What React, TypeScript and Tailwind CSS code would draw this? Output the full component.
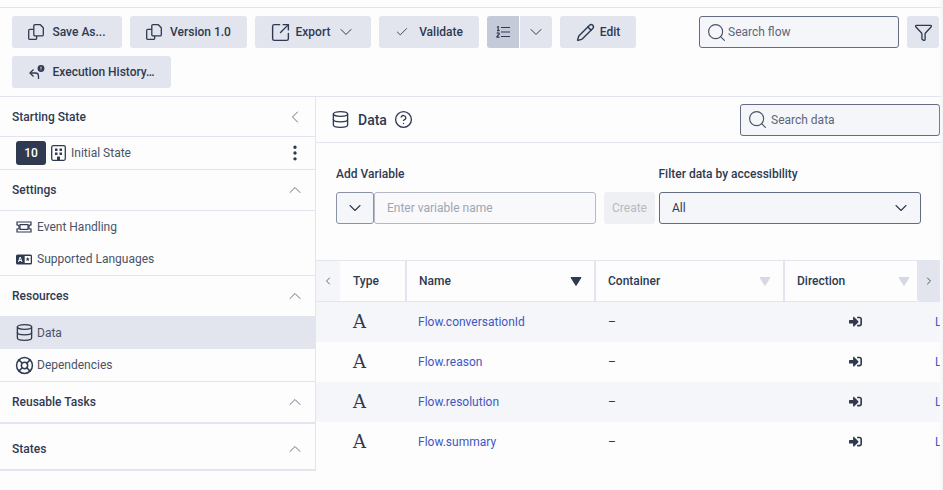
import React from "react";
import { Check, ChevronDown, ChevronLeft, ChevronRight, ChevronUp, Database, EllipsisVertical, Funnel, LifeBuoy, Pencil, Search, SquareArrowOutUpRight, CircleHelp } from "lucide-react";
import { FaSignInAlt } from "react-icons/fa";

const ink = "text-[#2f3a50]";

function CopyIcon() {
  return (
    <svg width="16" height="16" viewBox="0 0 16 16" fill="none" stroke="#2f3a50" strokeWidth="1.3" strokeLinejoin="round" className="shrink-0">
      <path d="M7 .7h5.300l3 3v7a1.200 1.200 0 0 1-1.200 1.200H7a1.200 1.200 0 0 1-1.200-1.200V1.900A1.200 1.200 0 0 1 7 .7z" />
      <path d="M5.800 5.300H1.900A1.200 1.200 0 0 0 .7 6.500v8a.8.800 0 0 0 .8.800h6a1.200 1.200 0 0 0 1.200-1.200v-2.200" />
    </svg>
  );
}

function HistoryIcon() {
  return (
    <svg width="16" height="16" viewBox="0 0 16 16" fill="none" stroke="#2f3a50" strokeWidth="1.3" className="shrink-0">
      <path d="M4.500 5.500 1 9l3.500 3.500" />
      <path d="M1.500 9H6.500c2 0 3 1.500 3 3.500V15" />
      <circle cx="12" cy="4.500" r="3.400" fill="#2f3a50" stroke="none" />
      <path d="M12 2.700v2.200M12 5.600v.7" stroke="#e2e5ee" strokeWidth="1" />
    </svg>
  );
}

function OrderedIcon() {
  return (
    <svg width="14" height="12" viewBox="0 0 14 12" fill="none" stroke="#2f3a50" strokeWidth="1.100">
      <path d="M5 1.500h9M5 6h9M5 10.500h9" />
      <path d="M1 1.300 2.200.7v4M1 4.700h2.600" strokeWidth="1.200" />
      <path d="M.9 7.500c.3-.9 2.500-.9 2.500.3 0 1-2.500 1.700-2.500 3.300h2.700" strokeWidth="1.200" />
    </svg>
  );
}

function BuildingIcon() {
  return (
    <svg width="15" height="16" viewBox="0 0 15 16" fill="none" stroke="#2f3a50" strokeWidth="1.300" className="shrink-0">
      <rect x="0.700" y="0.700" width="13.600" height="14.600" rx="1.500" />
      <path d="M4 3.500h2.500V6H4zM8.500 3.500H11V6H8.500zM4 7.500h2.500V10H4zM8.500 7.500H11V10H8.500zM6 15v-3.500h3V15z" fill="#2f3a50" stroke="none" />
    </svg>
  );
}

function TicketIcon() {
  return (
    <svg width="16" height="12" viewBox="0 0 16 12" fill="none" stroke="#2f3a50" strokeWidth="1.200">
      <path d="M1 1h14v2.800a2.200 2.200 0 0 0 0 4.400V11H1V8.200a2.200 2.200 0 0 0 0-4.400z" />
      <rect x="4" y="3.600" width="8" height="4.800" />
    </svg>
  );
}

function LangIcon() {
  return (
    <svg width="16" height="11" viewBox="0 0 16 11">
      <rect x="0" y="0.500" width="16" height="10" rx="1.500" fill="#2f3a50" />
      <path d="M2.400 8 4.200 3l1.800 5M3 6.500h2.400" stroke="#fff" strokeWidth="1" fill="none" />
      <rect x="8.700" y="2" width="6" height="7" fill="#fff" />
      <path d="m11.700 3 .6 1.400 1.400.1-1 1 .3 1.500-1.300-.8-1.300.8.300-1.500-1-1 1.400-.1z" fill="#2f3a50" />
    </svg>
  );
}

function Btn({ icon, label, after, w, gap = "gap-2" }: { icon: React.ReactNode; label: string; after?: React.ReactNode; w: string; gap?: string }) {
  return (
    <button className={`h-8 ${w} flex items-center justify-center ${gap} rounded-[3px] bg-[#e2e5ee] text-xs font-medium ${ink}`}>
      {icon}
      <span>{label}</span>
      {after}
    </button>
  );
}

function SectionHead({ title, h, border, left, extra = "" }: { title: string; h: string; border: string; left?: boolean; extra?: string }) {
  return (
    <div className={`${h} ${border} ${extra} border-[#e2e5ee] flex items-center justify-between pl-3 pr-[10px]`}>
      <span className={`text-xs font-medium ${ink}`}>{title}</span>
      {left ? <ChevronLeft size={20} strokeWidth={1.1} className="text-[#5e6678]" /> : <ChevronUp size={20} strokeWidth={1.1} className="text-[#5e6678]" />}
    </div>
  );
}

function Item({ icon, label, h = "h-8", active }: { icon: React.ReactNode; label: string; h?: string; active?: boolean }) {
  return (
    <div className={`${h} flex items-center pl-4 ${active ? "bg-[#e2e5ee]" : ""}`}>
      <span className="w-[21px] shrink-0 flex items-center">{icon}</span>
      <span className="text-xs text-[#4a5366]">{label}</span>
    </div>
  );
}

function Sidebar() {
  return (
    <aside className="w-[316px] shrink-0 border-r border-[#e2e5ee]">
      <SectionHead title="Starting State" h="h-10" border="border-b" left />
      <div className="h-[33px] border-b border-[#e2e5ee] flex items-center pl-4 pr-[10px]">
        <span className="w-[30px] h-6 rounded-[3px] bg-[#2f3a50] text-white text-xs font-medium flex items-center justify-center">10</span>
        <span className="ml-[5px] mr-[5px]"><BuildingIcon /></span>
        <span className="text-xs text-[#4a5366] flex-1">Initial State</span>
        <EllipsisVertical size={20} strokeWidth={2.1} className="text-[#2f3a50]" />
      </div>
      <SectionHead title="Settings" h="h-[41px]" border="border-b" />
      <Item icon={<TicketIcon />} label="Event Handling" />
      <Item icon={<LangIcon />} label="Supported Languages" />
      <div className="border-t border-[#e2e5ee]">
        <SectionHead title="Resources" h="h-10" border="" />
      </div>
      <Item active h="h-[33px]" icon={<Database size={19} strokeWidth={1.7} className="text-[#2f3a50] shrink-0 -ml-[1px]" />} label="Data" />
      <Item icon={<LifeBuoy size={19} strokeWidth={1.9} className="text-[#2f3a50] shrink-0 -ml-[1.500px]" />} label="Dependencies" />
      <div className="border-t border-[#e2e5ee]">
        <SectionHead title="Reusable Tasks" h="h-[42px]" border="border-b-2" />
      </div>
      <SectionHead title="States" h="h-[47px]" border="border-b-2" extra="pt-[5px]" />
    </aside>
  );
}

function Th({ label, w, active, sep, plain, pr = "pr-3", pl = "pl-3" }: { label: string; w: string; active?: boolean; sep?: boolean; plain?: boolean; pr?: string; pl?: string }) {
  return (
    <div className={`${w} shrink-0 h-full flex items-center justify-between ${pl} ${pr} ${sep ? "border-r-2 border-[#e2e5ee]" : ""}`}>
      <span className={`text-xs font-medium ${ink}`}>{label}</span>
      {!plain && (
        <svg width="12" height="9" viewBox="0 0 12 9"><path d="M1 0.500h10L6 8.500z" fill={active ? "#2f3a50" : "#d5d9e3"} stroke={active ? "#2f3a50" : "#d5d9e3"} strokeLinejoin="round" /></svg>
      )}
    </div>
  );
}

function Row({ name, shaded }: { name: string; shaded?: boolean }) {
  return (
    <div className={`h-10 flex items-center ${shaded ? "bg-[#f5f6f9]" : ""}`}>
      <div className="w-[91px] shrink-0 pl-[37px] font-['DejaVu_Serif',serif] text-[18px] leading-none text-[#2f3a50]">A</div>
      <div className="w-[189px] shrink-0 pl-[11px] text-xs text-[#3f57c4]">{name}</div>
      <div className="w-[189px] shrink-0 pl-3 text-xs text-[#2f3a50]">–</div>
      <div className="w-[150px] shrink-0 flex justify-end pr-[73px] pb-[2px] text-[#2f3a50]"><FaSignInAlt size={13} /></div>
      <div className="w-[5px] overflow-hidden text-xs text-[#3f57c4]">L</div>
    </div>
  );
}

function Main() {
  return (
    <main className="flex-1 min-w-0">
      <div className="h-[46px] border-b border-[#e2e5ee] flex items-center pl-4 pr-[3px]">
        <Database size={19} strokeWidth={1.7} className="text-[#2f3a50] -ml-[1px]" />
        <span className={`ml-[8px] text-sm font-medium ${ink}`}>Data</span>
        <CircleHelp size={19} strokeWidth={1.7} className="ml-[7px] text-[#2f3a50]" />
        <div className="ml-auto w-[200px] h-8 rounded-[3px] border border-[#626b80] bg-[#f5f6f9] flex items-center pl-[6px] gap-[3px]">
          <Search size={21} strokeWidth={1.3} className="text-[#4a5366]" />
          <span className="text-xs text-[#5e6678]">Search data</span>
        </div>
      </div>
      <div className="h-[117px] pl-5 pt-[23px] flex items-start">
        <div>
          <div className={`text-xs font-medium leading-[16px] ${ink} mb-[10px]`}>Add Variable</div>
          <div className="flex">
            <div className="w-[38px] h-8 rounded-[3px] border border-[#8a92a5] bg-[#f5f6f9] flex items-center justify-center">
              <ChevronDown size={20} strokeWidth={1.3} className="text-[#2f3a50]" />
            </div>
            <div className="w-[222px] h-8 rounded-[3px] border border-[#b4b9c6] bg-[#f9f9fb] flex items-center pl-3 text-xs text-[#a0a5b1]">Enter variable name</div>
            <div className="ml-2 w-[51px] h-8 rounded-[3px] bg-[#eff0f4] flex items-center justify-center text-xs text-[#b5b9c2]">Create</div>
          </div>
        </div>
        <div className="ml-1">
          <div className={`text-xs font-medium leading-[16px] ${ink} mb-[10px] -ml-[0.500px]`}>Filter data by accessibility</div>
          <div className="w-[262px] h-8 rounded-[3px] border border-[#626b80] bg-[#f5f6f9] flex items-center justify-between pl-3 pr-[9px] text-xs text-[#2f3a50]">
            All
            <ChevronDown size={20} strokeWidth={1.3} className="text-[#2f3a50]" />
          </div>
        </div>
      </div>
      <div className="w-[624px] overflow-hidden">
        <div className="h-[42px] border-y border-[#e2e5ee] flex items-center">
          <div className="w-[24px] h-full rounded-br-[3px] bg-[#f5f6f9] flex items-center justify-center shrink-0">
            <ChevronLeft size={12} className="text-[#626b80]" />
          </div>
          <Th label="Type" w="w-[67px]" sep plain pr="pr-0" pl="pl-[13px]" />
          <Th label="Name" w="w-[189px]" active sep />
          <Th label="Container" w="w-[189px]" sep />
          <Th label="Direction" w="w-[132px]" pr="pr-[7px]" />
          <div className="w-[23px] h-full rounded-bl-[3px] bg-[#e2e5ee] flex items-center justify-center shrink-0">
            <ChevronRight size={12} className="text-[#4a5366]" />
          </div>
        </div>
        <Row shaded name="Flow.conversationId" />
        <Row name="Flow.reason" />
        <Row shaded name="Flow.resolution" />
        <Row name="Flow.summary" />
      </div>
    </main>
  );
}

export default function App() {
  return (
    <div className="relative w-[943px] h-[490px] overflow-hidden bg-[#fdfdfe] font-[Roboto,sans-serif]">
      <div className="h-[7px]" />
      <header className="h-[90px] border-y border-[#e2e5ee] flex pl-3 pr-1 pt-2">
        <div className="flex-1 min-w-0 flex flex-wrap gap-2 content-start">
          <Btn w="w-[110px]" icon={<CopyIcon />} label="Save As..." />
          <Btn w="w-[117px]" icon={<CopyIcon />} label="Version 1.0" />
          <Btn w="w-[116px]" icon={<SquareArrowOutUpRight size={21} strokeWidth={1.6} className="shrink-0" />} label="Export" gap="gap-[5px]" after={<ChevronDown size={20} strokeWidth={1.2} className="shrink-0 ml-[1px]" />} />
          <Btn w="w-[100px]" icon={<Check size={14} strokeWidth={1.5} className="mr-[2px]" />} label="Validate" />
          <div className="flex h-8 rounded-[3px] overflow-hidden">
            <div className="w-8 bg-[#c5cad8] flex items-center justify-center"><OrderedIcon /></div>
            <div className="w-[32px] ml-px bg-[#e2e5ee] flex items-center justify-center text-[#2f3a50]"><ChevronDown size={20} strokeWidth={1.2} /></div>
          </div>
          <Btn w="w-[76px]" gap="gap-[5px]" icon={<Pencil size={19} strokeWidth={1.8} className="shrink-0" />} label="Edit" />
          <Btn w="w-[159px]" icon={<HistoryIcon />} label="Execution History…" />
        </div>
        <div className="flex gap-2 shrink-0 w-[240px] justify-end">
          <div className="w-[200px] h-8 rounded-[3px] border border-[#626b80] bg-[#f5f6f9] flex items-center pl-[6px] gap-[1px]">
            <Search size={21} strokeWidth={1.3} className="text-[#4a5366]" />
            <span className="text-xs text-[#5e6678]">Search flow</span>
          </div>
          <div className="w-8 h-8 rounded-[3px] bg-[#e2e5ee] flex items-center justify-center text-[#2f3a50]"><Funnel size={19} strokeWidth={1.7} /></div>
        </div>
      </header>
      <div className="flex">
        <Sidebar />
        <Main />
      </div>
      <div className="absolute right-0 top-0 bottom-0 w-[4px] bg-gradient-to-r from-transparent to-[#f4f4f7]" />
    </div>
  );
}
